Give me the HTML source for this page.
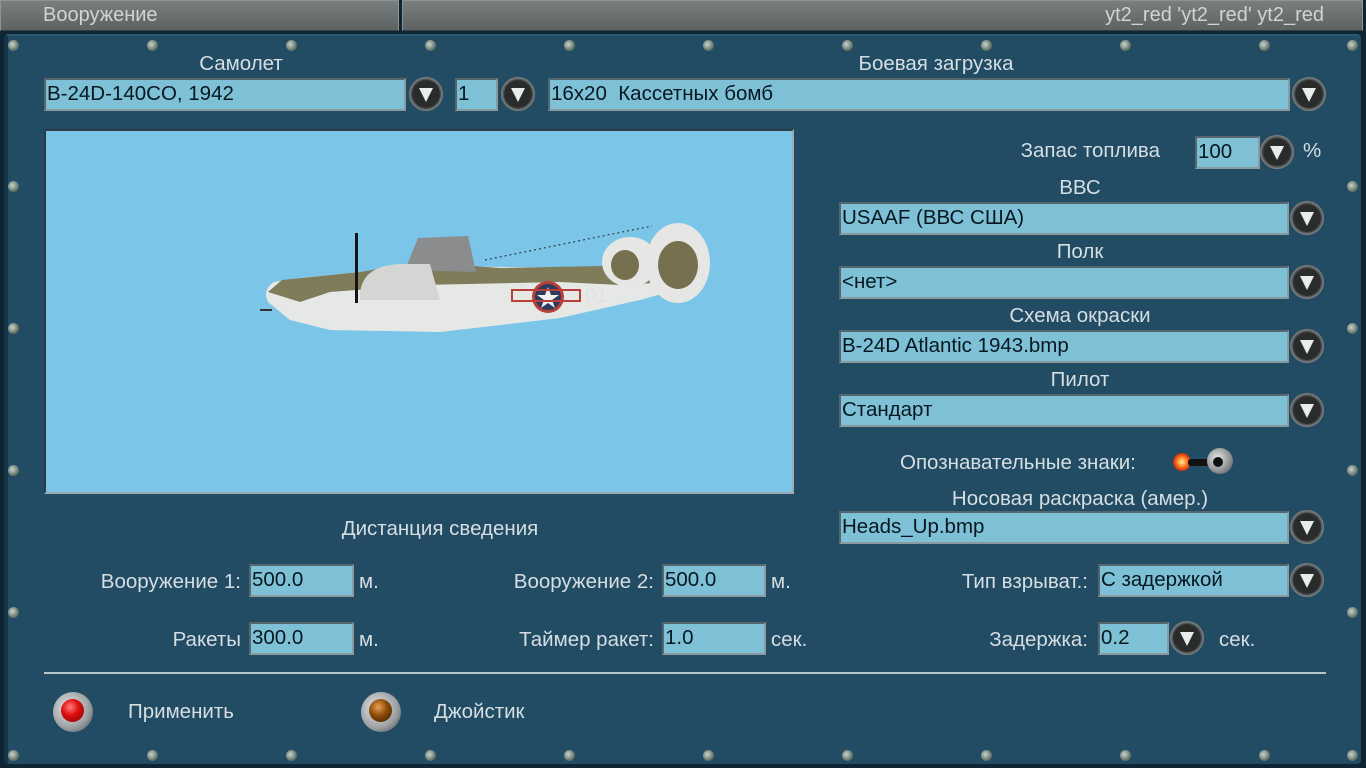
<!DOCTYPE html>
<html><head><meta charset="utf-8"><style>
*{margin:0;padding:0;box-sizing:border-box}
body{width:1366px;height:768px;overflow:hidden;background:#0e2533;font-family:"Liberation Sans",sans-serif;position:relative}
.a{position:absolute}
.title{position:absolute;top:0;height:31px;background:linear-gradient(#7a7e7e,#5d6262);border:1px solid #8d9292;border-bottom-color:#3a3e3e;color:#d0d4d4;font-size:20px;line-height:29px}
.panel{position:absolute;left:4px;top:34px;width:1357px;height:730px;background:#214c64;border-left:4px solid #163647;border-top:2px solid #2c5a74;border-radius:4px}
.lbl{position:absolute;color:#d6dee2;font-size:20.5px;line-height:20px;white-space:nowrap}
.c{transform:translateX(-50%)}
.r{transform:translateX(-100%)}
.f{position:absolute;background:#7ec0d6;border:2px solid #55666c;border-right-color:#8a9a9e;border-bottom-color:#8a9a9e;color:#071820;font-size:20.5px;line-height:28px;padding-left:1px;white-space:nowrap;overflow:hidden;height:33px}
.b{position:absolute;width:34px;height:34px;border-radius:50%;background:radial-gradient(circle at 50% 50%,#2a2c2c 0 55%,#5a5e5e 62%,#8a8e8e 72%,#3a3c3c 100%)}
.b:after{content:"";position:absolute;left:10px;top:11px;border-left:7px solid transparent;border-right:7px solid transparent;border-top:14px solid #e8ecec}
.s{position:absolute;width:11px;height:11px;border-radius:50%;background:radial-gradient(circle at 40% 40%,#c8d4cc,#5a6a60 70%,#2a3430);}
</style></head><body>
<div class="title" style="left:0;width:399px;padding-left:42px">Вооружение</div>
<div class="title" style="left:402px;width:961px;text-align:right;padding-right:38px">yt2_red 'yt2_red' yt2_red</div>
<div class="panel"></div>

<div class="s" style="left:8px;top:40px"></div><div class="s" style="left:147px;top:40px"></div><div class="s" style="left:286px;top:40px"></div><div class="s" style="left:425px;top:40px"></div><div class="s" style="left:564px;top:40px"></div><div class="s" style="left:703px;top:40px"></div><div class="s" style="left:842px;top:40px"></div><div class="s" style="left:981px;top:40px"></div><div class="s" style="left:1120px;top:40px"></div><div class="s" style="left:1259px;top:40px"></div><div class="s" style="left:1347px;top:40px"></div>
<div class="s" style="left:8px;top:181px"></div><div class="s" style="left:8px;top:323px"></div><div class="s" style="left:8px;top:465px"></div><div class="s" style="left:8px;top:607px"></div>
<div class="s" style="left:1347px;top:181px"></div><div class="s" style="left:1347px;top:323px"></div><div class="s" style="left:1347px;top:465px"></div><div class="s" style="left:1347px;top:607px"></div>
<div class="s" style="left:8px;top:750px"></div><div class="s" style="left:147px;top:750px"></div><div class="s" style="left:286px;top:750px"></div><div class="s" style="left:425px;top:750px"></div><div class="s" style="left:564px;top:750px"></div><div class="s" style="left:703px;top:750px"></div><div class="s" style="left:842px;top:750px"></div><div class="s" style="left:981px;top:750px"></div><div class="s" style="left:1120px;top:750px"></div><div class="s" style="left:1259px;top:750px"></div><div class="s" style="left:1347px;top:750px"></div>

<div class="lbl c" style="left:241px;top:54px">Самолет</div>
<div class="f" style="left:44px;top:78px;width:362px">B-24D-140CO, 1942</div>
<div class="b" style="left:409px;top:77px"></div>
<div class="f" style="left:455px;top:78px;width:43px">1</div>
<div class="b" style="left:501px;top:77px"></div>
<div class="lbl c" style="left:936px;top:54px">Боевая загрузка</div>
<div class="f" style="left:548px;top:78px;width:742px">16x20&nbsp; Кассетных бомб</div>
<div class="b" style="left:1292px;top:77px"></div>

<div class="a" style="left:44px;top:129px;width:750px;height:365px;background:#7bc5e9;border:2px solid #2b3c44;border-right-color:#9aacb2;border-bottom-color:#9aacb2">
<svg width="746" height="361" viewBox="46 131 746 361">
<path d="M268 302 Q262 290 274 282 L300 278 L360 272 L420 266 L600 268 L690 268 L705 282 L640 300 L560 318 L440 332 L330 330 L290 320 Z" fill="#e6e8e6"/>
<path d="M268 292 L282 280 L360 272 L420 262 L500 268 L600 266 L650 262 L670 282 L620 285 L560 282 L420 285 L330 292 L300 302 Z" fill="#7f7c5a"/>
<path d="M405 270 L418 238 L468 236 L476 272 Z" fill="#8a8c8e"/>
<path d="M360 300 Q358 266 400 264 L430 264 L440 300 Z" fill="#d4d6d4"/>
<rect x="355" y="233" width="3" height="70" fill="#151515"/>
<ellipse cx="630" cy="262" rx="28" ry="25" fill="#e6e6e4"/>
<ellipse cx="625" cy="265" rx="14" ry="15" fill="#76704e"/>
<ellipse cx="678" cy="263" rx="32" ry="40" fill="#e6e6e4"/>
<ellipse cx="678" cy="265" rx="20" ry="24" fill="#76704e"/>
<circle cx="548" cy="297" r="16" fill="#b84038"/>
<circle cx="548" cy="297" r="13" fill="#2c3a5e"/>
<path d="M548 287 L551 295 L559 295 L552 300 L555 308 L548 303 L541 308 L544 300 L537 295 L545 295 Z" fill="#f0f0f0"/>
<rect x="512" y="290" width="68" height="11" fill="none" stroke="#b84038" stroke-width="2"/>
<text x="585" y="302" font-size="20" fill="#e0e0e0" font-family="Liberation Sans">01</text>
<line x1="260" y1="310" x2="272" y2="310" stroke="#333" stroke-width="2"/>
<line x1="485" y1="260" x2="652" y2="226" stroke="#222" stroke-dasharray="2 3"/>
</svg></div>

<div class="lbl r" style="left:1160px;top:141px">Запас топлива</div>
<div class="f" style="left:1195px;top:136px;width:65px">100</div>
<div class="b" style="left:1260px;top:135px"></div>
<div class="lbl" style="left:1303px;top:141px">%</div>

<div class="lbl c" style="left:1080px;top:178px">ВВС</div>
<div class="f" style="left:839px;top:202px;width:450px">USAAF (ВВС США)</div>
<div class="b" style="left:1290px;top:201px"></div>
<div class="lbl c" style="left:1080px;top:242px">Полк</div>
<div class="f" style="left:839px;top:266px;width:450px">&lt;нет&gt;</div>
<div class="b" style="left:1290px;top:265px"></div>
<div class="lbl c" style="left:1080px;top:306px">Схема окраски</div>
<div class="f" style="left:839px;top:330px;width:450px">B-24D Atlantic 1943.bmp</div>
<div class="b" style="left:1290px;top:329px"></div>
<div class="lbl c" style="left:1080px;top:370px">Пилот</div>
<div class="f" style="left:839px;top:394px;width:450px">Стандарт</div>
<div class="b" style="left:1290px;top:393px"></div>

<div class="lbl" style="left:900px;top:453px">Опознавательные знаки:</div>
<div class="a" style="left:1173px;top:453px;width:18px;height:18px;border-radius:50%;background:radial-gradient(#fff0a0,#ff7a20 40%,#c83010 70%,rgba(200,40,10,0))"></div>
<div class="a" style="left:1188px;top:459px;width:26px;height:7px;background:#111;border-radius:3px"></div>
<div class="a" style="left:1207px;top:448px;width:26px;height:26px;border-radius:50%;background:radial-gradient(circle at 40% 40%,#e8eaea,#8a8e90 60%,#3c4044)"></div>
<div class="a" style="left:1213px;top:457px;width:10px;height:10px;border-radius:50%;background:#111"></div>

<div class="lbl c" style="left:1080px;top:489px">Носовая раскраска (амер.)</div>
<div class="f" style="left:839px;top:511px;width:450px">Heads_Up.bmp</div>
<div class="b" style="left:1290px;top:510px"></div>

<div class="lbl c" style="left:440px;top:519px">Дистанция сведения</div>

<div class="lbl r" style="left:241px;top:572px">Вооружение 1:</div>
<div class="f" style="left:249px;top:564px;width:105px">500.0</div>
<div class="lbl" style="left:359px;top:572px">м.</div>
<div class="lbl r" style="left:654px;top:572px">Вооружение 2:</div>
<div class="f" style="left:662px;top:564px;width:104px">500.0</div>
<div class="lbl" style="left:771px;top:572px">м.</div>
<div class="lbl r" style="left:1088px;top:572px">Тип взрыват.:</div>
<div class="f" style="left:1098px;top:564px;width:191px">С задержкой</div>
<div class="b" style="left:1290px;top:563px"></div>

<div class="lbl r" style="left:241px;top:630px">Ракеты</div>
<div class="f" style="left:249px;top:622px;width:105px">300.0</div>
<div class="lbl" style="left:359px;top:630px">м.</div>
<div class="lbl r" style="left:654px;top:630px">Таймер ракет:</div>
<div class="f" style="left:662px;top:622px;width:104px">1.0</div>
<div class="lbl" style="left:771px;top:630px">сек.</div>
<div class="lbl r" style="left:1088px;top:630px">Задержка:</div>
<div class="f" style="left:1098px;top:622px;width:71px">0.2</div>
<div class="b" style="left:1170px;top:621px"></div>
<div class="lbl" style="left:1219px;top:630px">сек.</div>

<div class="a" style="left:44px;top:672px;width:1282px;height:2px;background:#b8c6ca"></div>

<div class="a" style="left:53px;top:692px;width:40px;height:40px;border-radius:50%;background:radial-gradient(circle at 40% 40%,#e8eaea,#9a9ea0 60%,#3c4044)"></div>
<div class="a" style="left:61px;top:699px;width:23px;height:23px;border-radius:50%;background:radial-gradient(circle at 40% 35%,#ff8080,#e01010 40%,#800000)"></div>
<div class="lbl" style="left:128px;top:702px">Применить</div>
<div class="a" style="left:361px;top:692px;width:40px;height:40px;border-radius:50%;background:radial-gradient(circle at 40% 40%,#e8eaea,#9a9ea0 60%,#3c4044)"></div>
<div class="a" style="left:369px;top:699px;width:23px;height:23px;border-radius:50%;background:radial-gradient(circle at 40% 35%,#e8a050,#8a4a08 45%,#3a1a00)"></div>
<div class="lbl" style="left:434px;top:702px">Джойстик</div>
</body></html>
